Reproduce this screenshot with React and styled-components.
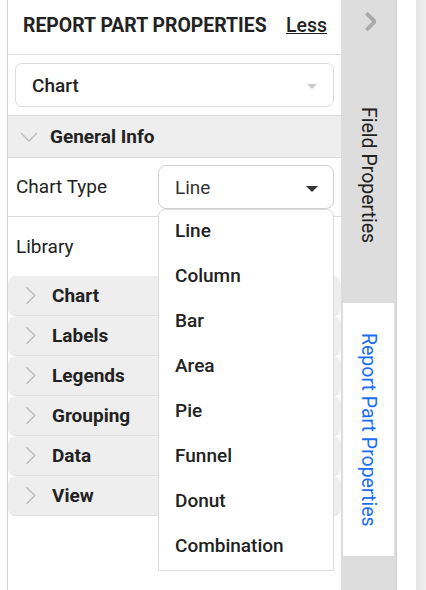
import styled, { createGlobalStyle } from "styled-components";

const Global = createGlobalStyle`
  html, body { margin: 0; padding: 0; background: #fff; }
  body { font-family: Roboto, "Liberation Sans", Arial, sans-serif; color: #222; }
`;

const sections = ["Chart", "Labels", "Legends", "Grouping", "Data", "View"];
const chartTypes = ["Line", "Column", "Bar", "Area", "Pie", "Funnel", "Donut", "Combination"];

function ChevronRight({ color = "#bbb", size = 12, weight = 1.2 }) {
    return (
        <svg width={size} height={size * 1.6} viewBox="0 0 10 16">
            <path d="M2 1 L9 8 L2 15" fill="none" stroke={color} strokeWidth={weight} />
        </svg>
    );
}

function ChevronDown() {
    return (
        <svg width="18" height="10" viewBox="0 0 18 10">
            <path d="M1 1 L9 9 L17 1" fill="none" stroke="#bbb" strokeWidth="1.3" />
        </svg>
    );
}

export default function App() {
    return (
        <Page>
            <Global />
            <Panel>
                <Header>
                    <Title>REPORT PART PROPERTIES</Title>
                    <Less>Less</Less>
                </Header>
                <SelectWrap>
                    <Select>
                        Chart
                        <Caret $light />
                    </Select>
                </SelectWrap>
                <GroupHeader>
                    <ChevronDown />
                    General Info
                </GroupHeader>
                <FieldRow>
                    <Label>Chart Type</Label>
                    <TypeBox>
                        <TypeSelect>
                            Line
                            <Caret />
                        </TypeSelect>
                        <Menu>
                            {chartTypes.map((t) => (
                                <MenuItem key={t}>{t}</MenuItem>
                            ))}
                        </Menu>
                    </TypeBox>
                </FieldRow>
                <FieldRow $last>
                    <Label>Library</Label>
                </FieldRow>
                <Sections>
                    {sections.map((s) => (
                        <Section key={s}>
                            <ChevronRight />
                            {s}
                        </Section>
                    ))}
                </Sections>
            </Panel>
            <Tabs>
                <TopArrow>
                    <ChevronRight color="#aaa" size={12} weight={3.2} />
                </TopArrow>
                <Tab>Field Properties</Tab>
                <Tab $active>Report Part Properties</Tab>
            </Tabs>
            <Gap />
            <Scroll />
        </Page>
    );
}

const Page = styled.div`
    display: flex;
    height: 590px;
    padding-left: 7px;
    box-sizing: border-box;
`;

const Panel = styled.div`
    width: 333px;
    flex-shrink: 0;
    border-left: 1px solid #d4d4d4;
    display: flex;
    flex-direction: column;
`;

const Header = styled.div`
    height: 55px;
    box-sizing: border-box;
    border-bottom: 1px solid #dcdcdc;
    display: flex;
    align-items: center;
    padding: 0 14px 3px 15px;
    justify-content: space-between;
`;

const Title = styled.div`
    flex-shrink: 0;
    white-space: nowrap;
    font-size: 19.4px;
    font-weight: 700;
    color: #222;
`;

const Less = styled.a`
    font-size: 19.5px;
    font-weight: 500;
    color: #222;
    text-decoration: underline;
`;

const SelectWrap = styled.div`
    padding: 8px 7px 8px 7px;
    border-bottom: 1px solid #dcdcdc;
`;

const Select = styled.div`
    height: 44px;
    box-sizing: border-box;
    border: 1px solid #dcdcdc;
    border-radius: 7px;
    display: flex;
    align-items: center;
    justify-content: space-between;
    padding: 0 16px 0 16px;
    font-size: 19px;
    font-weight: 500;
    color: #222;
`;

const Caret = styled.span`
    width: 0;
    height: 0;
    border-left: ${(p) => (p.$light ? 5 : 6.5)}px solid transparent;
    border-right: ${(p) => (p.$light ? 5 : 6.5)}px solid transparent;
    border-top: ${(p) => (p.$light ? 5 : 6)}px solid ${(p) => (p.$light ? "#ccc" : "#333")};
    margin-top: 3px;
`;

const GroupHeader = styled.div`
    height: 41px;
    background: #eeeeee;
    display: flex;
    align-items: center;
    gap: 12px;
    padding-left: 12px;
    font-size: 19px;
    font-weight: 700;
    color: #222;
`;

const FieldRow = styled.div`
    height: ${(p) => (p.$last ? 60 : 59)}px;
    box-sizing: border-box;
    border-top: 1px solid #dcdcdc;
    display: flex;
    align-items: ${(p) => (p.$last ? "center" : "flex-start")};
    padding-left: 8px;
`;

const Label = styled.div`
    width: 142px;
    font-size: 19px;
    color: #222;
    line-height: 58px;
`;

const TypeBox = styled.div`
    position: relative;
    width: 176px;
    padding-top: 7px;
`;

const TypeSelect = styled.div`
    height: 44px;
    box-sizing: border-box;
    border: 1px solid #d0d0d0;
    border-radius: 8px;
    display: flex;
    align-items: center;
    justify-content: space-between;
    padding: 0 15px 0 16px;
    font-size: 19px;
    color: #333;
`;

const Menu = styled.div`
    position: absolute;
    top: 51px;
    left: 0;
    width: 176px;
    box-sizing: border-box;
    background: #fff;
    border: 1px solid #dcdcdc;
    border-radius: 7px 7px 0 0;
    z-index: 5;
`;

const MenuItem = styled.div`
    height: 45px;
    box-sizing: border-box;
    display: flex;
    align-items: center;
    padding: 0 0 4px 16px;
    font-size: 19px;
    font-weight: 500;
    color: #222;
`;

const Sections = styled.div`
    display: flex;
    flex-direction: column;
`;

const Section = styled.div`
    height: 40px;
    box-sizing: border-box;
    background: #eeeeee;
    border-bottom: 1px solid #e0e0e0;
    border-radius: 8px;
    display: flex;
    align-items: center;
    gap: 16px;
    padding-left: 16px;
    font-size: 19px;
    font-weight: 700;
    color: #222;
`;

const Tabs = styled.div`
    width: 55px;
    flex-shrink: 0;
    background: #dddddd;
    border-right: 1px solid #cfcfcf;
    display: flex;
    flex-direction: column;
    align-items: flex-start;
`;

const TopArrow = styled.div`
    width: 55px;
    height: 44px;
    display: flex;
    align-items: center;
    justify-content: center;
    padding-left: 2px;
    box-sizing: border-box;
`;

const Tab = styled.div`
    writing-mode: vertical-rl;
    font-size: 19.5px;
    box-sizing: border-box;
    width: ${(p) => (p.$active ? 51 : 55)}px;
    display: flex;
    align-items: center;
    color: ${(p) => (p.$active ? "#1a6ef5" : "#222")};
    background: ${(p) => (p.$active ? "#fff" : "transparent")};
    height: ${(p) => (p.$active ? 253 : 259)}px;
    padding-top: ${(p) => (p.$active ? 30 : 63)}px;
    margin-left: ${(p) => (p.$active ? 2 : 0)}px;
`;

const Gap = styled.div`
    width: 19px;
    flex-shrink: 0;
`;

const Scroll = styled.div`
    flex: 1;
    background: linear-gradient(to right, #e6e6e6, #efefef);
`;
